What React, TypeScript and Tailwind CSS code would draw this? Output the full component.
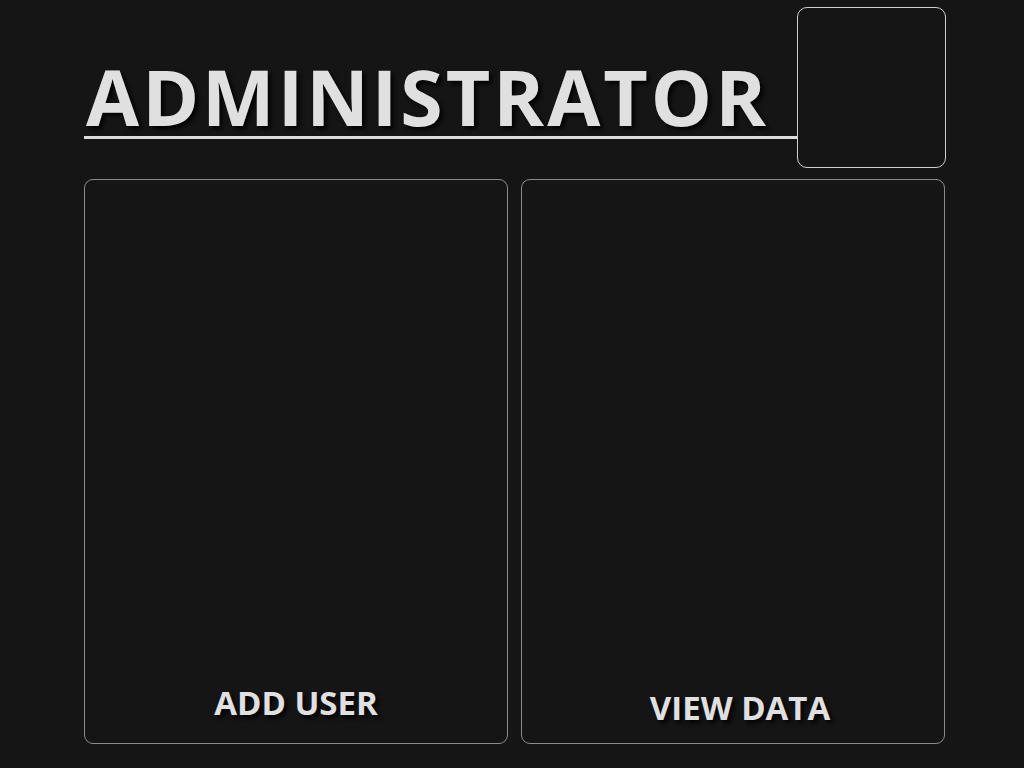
export default function App() {
  const shadow = "[text-shadow:3px_3px_4px_rgba(0,0,0,0.9)]";

  return (
    <div className="min-h-screen w-full bg-[#151515] font-['Open_Sans',sans-serif] text-[#e0e0e0]">
      <div className="ml-[84px] w-[862px] pt-[7px]">
        {/* Header */}
        <div className="flex">
          <div className="w-[715px] h-[132px] border-b-[3px] border-[#dcdcdc] flex items-end pl-[2px]">
            <h1
              className={`text-[77px] font-bold leading-none tracking-[3px] mb-[1px] ${shadow}`}
            >
              ADMINISTRATOR
            </h1>
          </div>
          <div className="w-[149px] h-[161px] rounded-[10px] border border-[#cfcfcf] bg-[#151515]" />
        </div>

        {/* Cards */}
        <div className="mt-[11px] grid grid-cols-2 gap-[13px] w-[861px]">
          <button className="h-[565px] rounded-[9px] border border-[#8a8a8a] flex items-end justify-center pb-[24px]">
            <span className={`text-[33px] font-bold leading-none ${shadow}`}>
              ADD USER
            </span>
          </button>
          <button className="h-[565px] rounded-[9px] border border-[#8a8a8a] flex items-end justify-center pb-[19px] pl-[14px]">
            <span className={`text-[33px] font-bold leading-none ${shadow}`}>
              VIEW DATA
            </span>
          </button>
        </div>
      </div>
    </div>
  );
}
